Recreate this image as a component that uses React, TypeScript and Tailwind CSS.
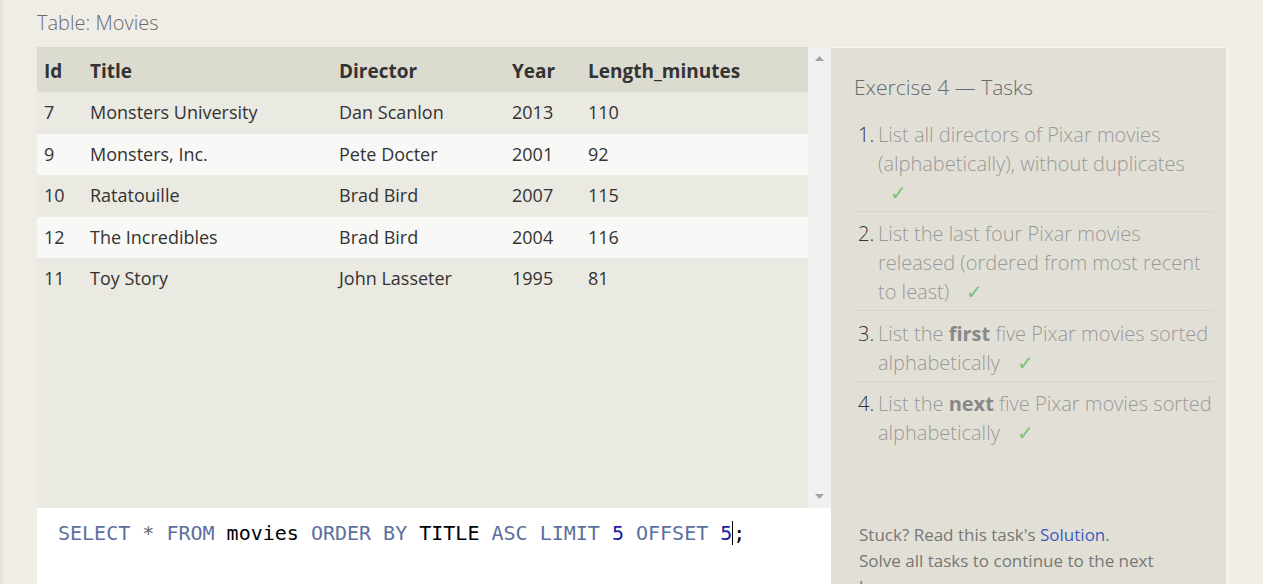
const rows = [
  { id: 7, title: "Monsters University", director: "Dan Scanlon", year: 2013, len: 110 },
  { id: 9, title: "Monsters, Inc.", director: "Pete Docter", year: 2001, len: 92 },
  { id: 10, title: "Ratatouille", director: "Brad Bird", year: 2007, len: 115 },
  { id: 12, title: "The Incredibles", director: "Brad Bird", year: 2004, len: 116 },
  { id: 11, title: "Toy Story", director: "John Lasseter", year: 1995, len: 81 },
];

const Check = () => <span className="ml-3 text-[#7cc27c]">✓</span>;

const App = () => {
  return (
    <div className="h-[584px] overflow-hidden bg-[#efede6] border-l-[3px] border-[#e6e4dc] font-['Open_Sans',sans-serif]">
      <div className="pl-[34px]">
        <div className="h-[47px] pt-[9px] text-[20px] text-[#6b6b6b] font-light leading-[28px]">Table: Movies</div>
        <div className="flex">
          <div className="flex w-[794px] flex-col">
            <div className="flex h-[461px] bg-[#eae9e2]">
              <table className="w-[771px] self-start border-collapse text-left text-[18px] text-[#333]">
                <thead>
                  <tr className="h-[45px] bg-[#dcdbd0] text-[19px]">
                    <th className="w-[53px] pl-[7px] pt-[3px] font-bold">Id</th>
                    <th className="w-[249px] pt-[3px] font-bold">Title</th>
                    <th className="w-[173px] pt-[3px] font-bold">Director</th>
                    <th className="w-[76px] pt-[3px] font-bold">Year</th>
                    <th className="pt-[3px] font-bold">Length_minutes</th>
                  </tr>
                </thead>
                <tbody>
                  {rows.map((r, i) => (
                    <tr key={r.id} className={`h-[41.5px] ${i % 2 ? "bg-[#f8f8f6]" : "bg-[#eae9e2]"}`}>
                      <td className="pl-[7px]">{r.id}</td>
                      <td>{r.title}</td>
                      <td>{r.director}</td>
                      <td>{r.year}</td>
                      <td>{r.len}</td>
                    </tr>
                  ))}
                </tbody>
              </table>
              <div className="flex w-[23px] flex-col items-center justify-between bg-[#f1f1f0] py-[9px]">
                <svg width="9" height="5" viewBox="0 0 9 5"><path d="M0 5 L4.5 0 L9 5Z" fill="#a3a3a3" /></svg>
                <svg width="9" height="5" viewBox="0 0 9 5"><path d="M0 0 L4.5 5 L9 0Z" fill="#a3a3a3" /></svg>
              </div>
            </div>
            <div className="h-[80px] bg-white pl-[21px] pt-[12px] font-['DejaVu_Sans_Mono',monospace] text-[20px] leading-[26px] whitespace-pre">
              <span className="text-[#5b6f9e]">SELECT</span>
              <span className="text-[#666]"> * </span>
              <span className="text-[#5b6f9e]">FROM</span>
              <span className="text-black"> movies </span>
              <span className="text-[#5b6f9e]">ORDER BY</span>
              <span className="text-black"> TITLE </span>
              <span className="text-[#5b6f9e]">ASC LIMIT</span>
              <span className="text-[#1a1aa6]"> 5 </span>
              <span className="text-[#5b6f9e]">OFFSET</span>
              <span className="text-[#1a1aa6]"> 5</span>
              <span className="border-l border-black text-black">;</span>
            </div>
          </div>
          <div className="flex h-[540px] w-[398px] flex-col border-r-[3px] border-t border-[#f5f4ef] bg-[#e2e0d6] pl-[23px] pr-[11px] font-light">
            <div className="pt-[25px] text-[21px] leading-[28px] text-[#636a72]">Exercise 4 — Tasks</div>
            <ol className="mt-[18.5px] text-[20px] leading-[29px] text-[#999]">
              <li className="flex border-b border-[#d7d5cb] pb-[4px]">
                <span className="w-[24px] shrink-0 pl-[4px] text-[#333]">1.</span>
                <span>List all directors of Pixar movies (alphabetically), without duplicates <Check /></span>
              </li>
              <li className="flex border-b border-[#d7d5cb] pb-[4px] pt-[7.5px]">
                <span className="w-[24px] shrink-0 pl-[4px] text-[#333]">2.</span>
                <span>List the last four Pixar movies released (ordered from most recent to least) <Check /></span>
              </li>
              <li className="flex border-b border-[#d7d5cb] pb-[4px] pt-[7.5px]">
                <span className="w-[24px] shrink-0 pl-[4px] text-[#333]">3.</span>
                <span>List the <b className="font-bold text-[#888]">first</b> five Pixar movies sorted alphabetically <Check /></span>
              </li>
              <li className="flex pt-[7.5px]">
                <span className="w-[24px] shrink-0 pl-[4px] text-[#333]">4.</span>
                <span>List the <b className="font-bold text-[#888]">next</b> five Pixar movies sorted alphabetically <Check /></span>
              </li>
            </ol>
            <div className="mt-auto mb-[-13px] pl-[5px] pr-[60px] text-[17px] font-normal leading-[26px] text-[#777]">
              Stuck? Read this task's <span className="text-[#3f5bc4]">Solution</span>.
              <br />
              Solve all tasks to continue to the next lesson.
            </div>
          </div>
        </div>
      </div>
    </div>
  );
};

export default App;
